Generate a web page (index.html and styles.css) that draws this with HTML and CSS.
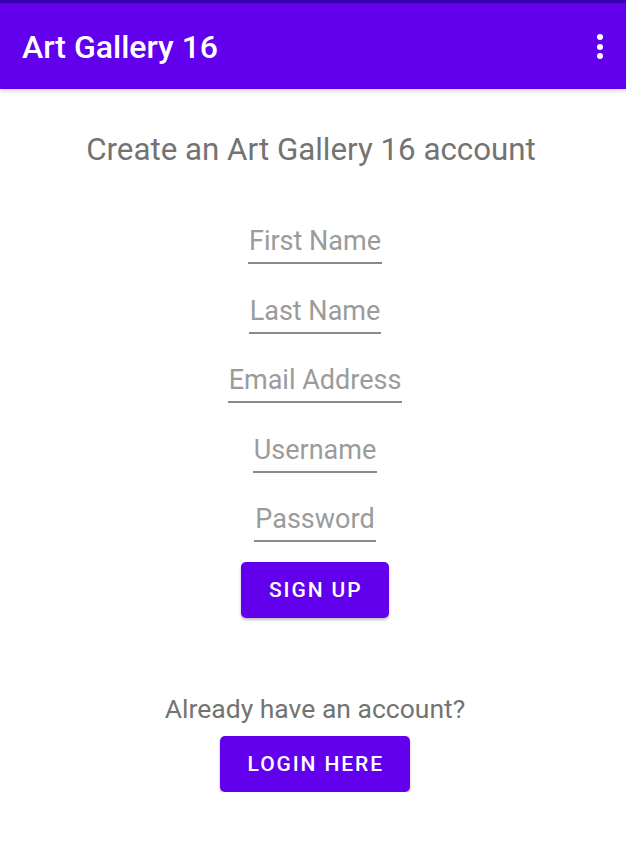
FILE: index.html
```html
<!DOCTYPE html>
<html>
<head>
<meta charset="utf-8">
<link rel="stylesheet" href="styles.css">
</head>
<body>
<div class="status"></div>
<header class="appbar">
  <span class="title">Art Gallery 16</span>
  <span class="menu"><i></i><i></i><i></i></span>
</header>
<main class="content">
  <h1 class="heading">Create an Art Gallery 16 account</h1>
  <div class="field">First Name</div>
  <div class="field">Last Name</div>
  <div class="field">Email Address</div>
  <div class="field">Username</div>
  <div class="field">Password</div>
  <button class="btn signup">SIGN UP</button>
  <p class="already">Already have an account?</p>
  <button class="btn login">LOGIN HERE</button>
</main>
</body>
</html>
```

FILE: styles.css
```css
html, body {
  margin: 0;
  padding: 0;
  background: #ffffff;
  font-family: Roboto, "Noto Sans", sans-serif;
}
.status {
  height: 3px;
  background: #3700b3;
}
.appbar {
  height: 86px;
  background: #6200ee;
  display: flex;
  align-items: center;
  justify-content: space-between;
  padding: 0 23px 0 22px;
  box-shadow: 0 2px 4px rgba(0,0,0,0.18);
  position: relative;
}
.title {
  color: #ffffff;
  font-size: 32px;
  font-weight: 500;
  margin-top: 2px;
}
.menu {
  display: flex;
  flex-direction: column;
  gap: 3.5px;
  margin-top: 1px;
}
.menu i {
  display: block;
  width: 6px;
  height: 6px;
  border-radius: 50%;
  background: #ffffff;
}
.content {
  display: flex;
  flex-direction: column;
  align-items: center;
  padding-left: 4px;
}
.heading {
  margin: 43px 0 0 -8px;
  font-size: 31.3px;
  line-height: 36px;
  font-weight: 400;
  color: #737373;
}
.field {
  margin-top: 57px;
  font-size: 27px;
  line-height: 32px;
  color: #9b9b9b;
  padding: 0 1px 5px;
  border-bottom: 2px solid #8a8a8a;
}
.field + .field {
  margin-top: 30.5px;
}
.btn {
  border: none;
  background: #6200ee;
  color: #ffffff;
  font-family: Roboto, sans-serif;
  font-weight: 500;
  font-size: 21px;
  letter-spacing: 1.9px;
  border-radius: 5px;
  height: 56px;
  padding: 0 26px 0 27.5px;
  box-shadow: 0 2px 3px rgba(0,0,0,0.25);
}
.signup {
  margin-top: 20px;
}
.already {
  margin: 76px 0 0;
  font-size: 26.5px;
  line-height: 30px;
  color: #737373;
}
.login {
  margin-top: 12px;
}
```
